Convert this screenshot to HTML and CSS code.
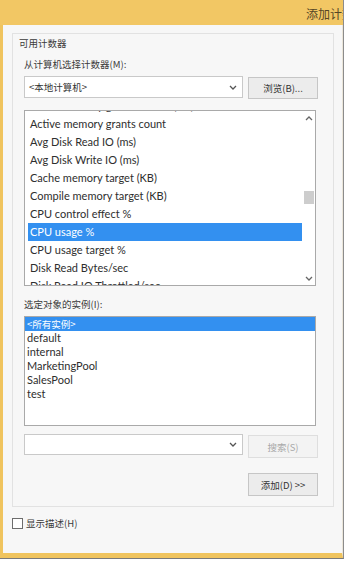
FILE: index.html
```html
<!DOCTYPE html>
<html lang="zh-CN">
<head>
<meta charset="utf-8">
<link rel="stylesheet" href="styles.css">
</head>
<body>
<div class="win">
  <div class="titlebar"><span class="title">添加计数器</span></div>
  <div class="content">
    <div class="group">
      <div class="group-title">可用计数器</div>
      <div class="label first">从计算机选择计数器(M):</div>
      <div class="row">
        <div class="combo">
          <span class="combo-text">&lt;本地计算机&gt;</span>
          <svg class="chev" width="8" height="5" viewBox="0 0 8 5"><path d="M1 1 L4 4 L7 1" fill="none" stroke="#555" stroke-width="1.3"/></svg>
        </div>
        <div class="btn">浏览(B)...</div>
      </div>
      <div class="list counters">
        <div class="items">
          <div class="item">Active memory grant amount (KB)</div>
          <div class="item">Active memory grants count</div>
          <div class="item">Avg Disk Read IO (ms)</div>
          <div class="item">Avg Disk Write IO (ms)</div>
          <div class="item">Cache memory target (KB)</div>
          <div class="item">Compile memory target (KB)</div>
          <div class="item">CPU control effect %</div>
          <div class="item sel">CPU usage %</div>
          <div class="item">CPU usage target %</div>
          <div class="item">Disk Read Bytes/sec</div>
          <div class="item">Disk Read IO Throttled/sec</div>
        </div>
        <div class="scrollbar">
          <svg class="arrow" width="8" height="5" viewBox="0 0 8 5"><path d="M1 4 L4 1 L7 4" fill="none" stroke="#666" stroke-width="1.3"/></svg>
          <div class="track"><div class="thumb"></div></div>
          <svg class="arrow" width="8" height="5" viewBox="0 0 8 5"><path d="M1 1 L4 4 L7 1" fill="none" stroke="#666" stroke-width="1.3"/></svg>
        </div>
      </div>
      <div class="label inst-label">选定对象的实例(I):</div>
      <div class="list instances">
        <div class="inst sel">&lt;所有实例&gt;</div>
        <div class="inst">default</div>
        <div class="inst">internal</div>
        <div class="inst">MarketingPool</div>
        <div class="inst">SalesPool</div>
        <div class="inst">test</div>
      </div>
      <div class="row search-row">
        <div class="combo">
          <span class="combo-text"></span>
          <svg class="chev" width="8" height="5" viewBox="0 0 8 5"><path d="M1 1 L4 4 L7 1" fill="none" stroke="#555" stroke-width="1.3"/></svg>
        </div>
        <div class="btn disabled">搜索(S)</div>
      </div>
      <div class="row add-row">
        <div class="btn add">添加(D) &gt;&gt;</div>
      </div>
    </div>
    <label class="check"><span class="box"></span><span>显示描述(H)</span></label>
  </div>
</div>
</body>
</html>
```

FILE: styles.css
```css
html, body {
  margin: 0;
  padding: 0;
  background: #ffffff;
}
body {
  width: 347px;
  height: 564px;
  overflow: hidden;
  font-family: "Lato", "Noto Sans CJK SC", sans-serif;
  font-size: 11px;
  color: #333;
}
.win {
  width: 343px;
  height: 558px;
  border-right: 1px solid #8c8c8c;
  border-bottom: 1px solid #7a7a7a;
  display: flex;
  flex-direction: column;
}
.titlebar {
  height: 25px;
  flex: none;
  background: #f2c764;
  overflow: hidden;
  display: flex;
  align-items: center;
  padding-left: 306px;
  white-space: nowrap;
}
.title {
  font-family: "Noto Sans CJK SC", sans-serif;
  font-size: 12px;
  color: #554526;
  margin-top: 2px;
}
.content {
  flex: 1;
  background: #f7f7f7;
  border-left: 3px solid #f0c45e;
  border-bottom: 5px solid #f0c45e;
  border-right: 1px solid #ebe6da;
  padding: 8px 0 0 9px;
}
.group {
  width: 309px;
  border: 1px solid #e2e2e2;
  padding: 0 0 10px 11px;
}
.group-title, .label, .check {
  font-family: "Noto Sans CJK SC", sans-serif;
  font-size: 9.5px;
  line-height: 16px;
  color: #3a3a3a;
}
.group-title {
  margin-left: -5px;
  margin-top: 1px;
}
.label.first {
  margin-top: 5px;
}
.row {
  display: flex;
  gap: 5px;
  align-items: flex-start;
}
.combo {
  width: 208px;
  height: 20px;
  background: #fff;
  border: 1px solid #c9c9c9;
  display: flex;
  align-items: center;
  justify-content: space-between;
  padding: 0 5px 0 4px;
  margin-top: 4px;
}
.combo-text {
  font-family: "Noto Sans CJK SC", sans-serif;
  font-size: 9.5px;
  color: #333;
}
.combo .chev { flex: none; }
.btn {
  width: 68px;
  height: 20px;
  margin-top: 5px;
  background: #ececec;
  border: 1px solid #c6c6c6;
  font-family: "Noto Sans CJK SC", sans-serif;
  font-size: 9.5px;
  color: #333;
  display: flex;
  align-items: center;
  justify-content: center;
}
.btn.disabled {
  background: #f3f3f3;
  border-color: #dedede;
  color: #a8a8a8;
  height: 21px;
}
.list {
  width: 290px;
  background: #fff;
  border: 1px solid #a9a9a9;
  overflow: hidden;
}
.counters {
  height: 174px;
  margin-top: 11px;
  display: flex;
}
.items {
  flex: 1;
  margin-top: -14px;
  padding-left: 3px;
}
.item {
  height: 18px;
  line-height: 18px;
  padding-left: 2px;
  white-space: nowrap;
  color: #2e2e2e;
}
.item.sel, .inst.sel {
  background: #3390f0;
  color: #fff;
}
.scrollbar {
  width: 13px;
  flex: none;
  display: flex;
  flex-direction: column;
  align-items: center;
  padding: 5px 0 4px;
}
.arrow { flex: none; }
.track {
  flex: 1;
  width: 10px;
  padding-top: 70px;
}
.thumb {
  width: 10px;
  height: 13px;
  background: #cdcdcd;
}
.inst-label {
  margin-top: 10px;
}
.instances {
  height: 108px;
  margin-top: 4px;
}
.inst {
  height: 14px;
  line-height: 14px;
  padding-left: 2px;
  color: #2e2e2e;
}
.inst.sel {
  font-family: "Noto Sans CJK SC", sans-serif;
  font-size: 9.5px;
}
.search-row {
  margin-top: 4px;
}
.search-row .combo { height: 19px; }
.add-row {
  padding-left: 224px;
}
.btn.add {
  height: 21px;
  margin-top: 15px;
}
.check {
  display: flex;
  align-items: center;
  gap: 3px;
  margin-top: 8px;
}
.box {
  width: 9px;
  height: 9px;
  background: #fff;
  border: 1px solid #6d6d6d;
}
```
